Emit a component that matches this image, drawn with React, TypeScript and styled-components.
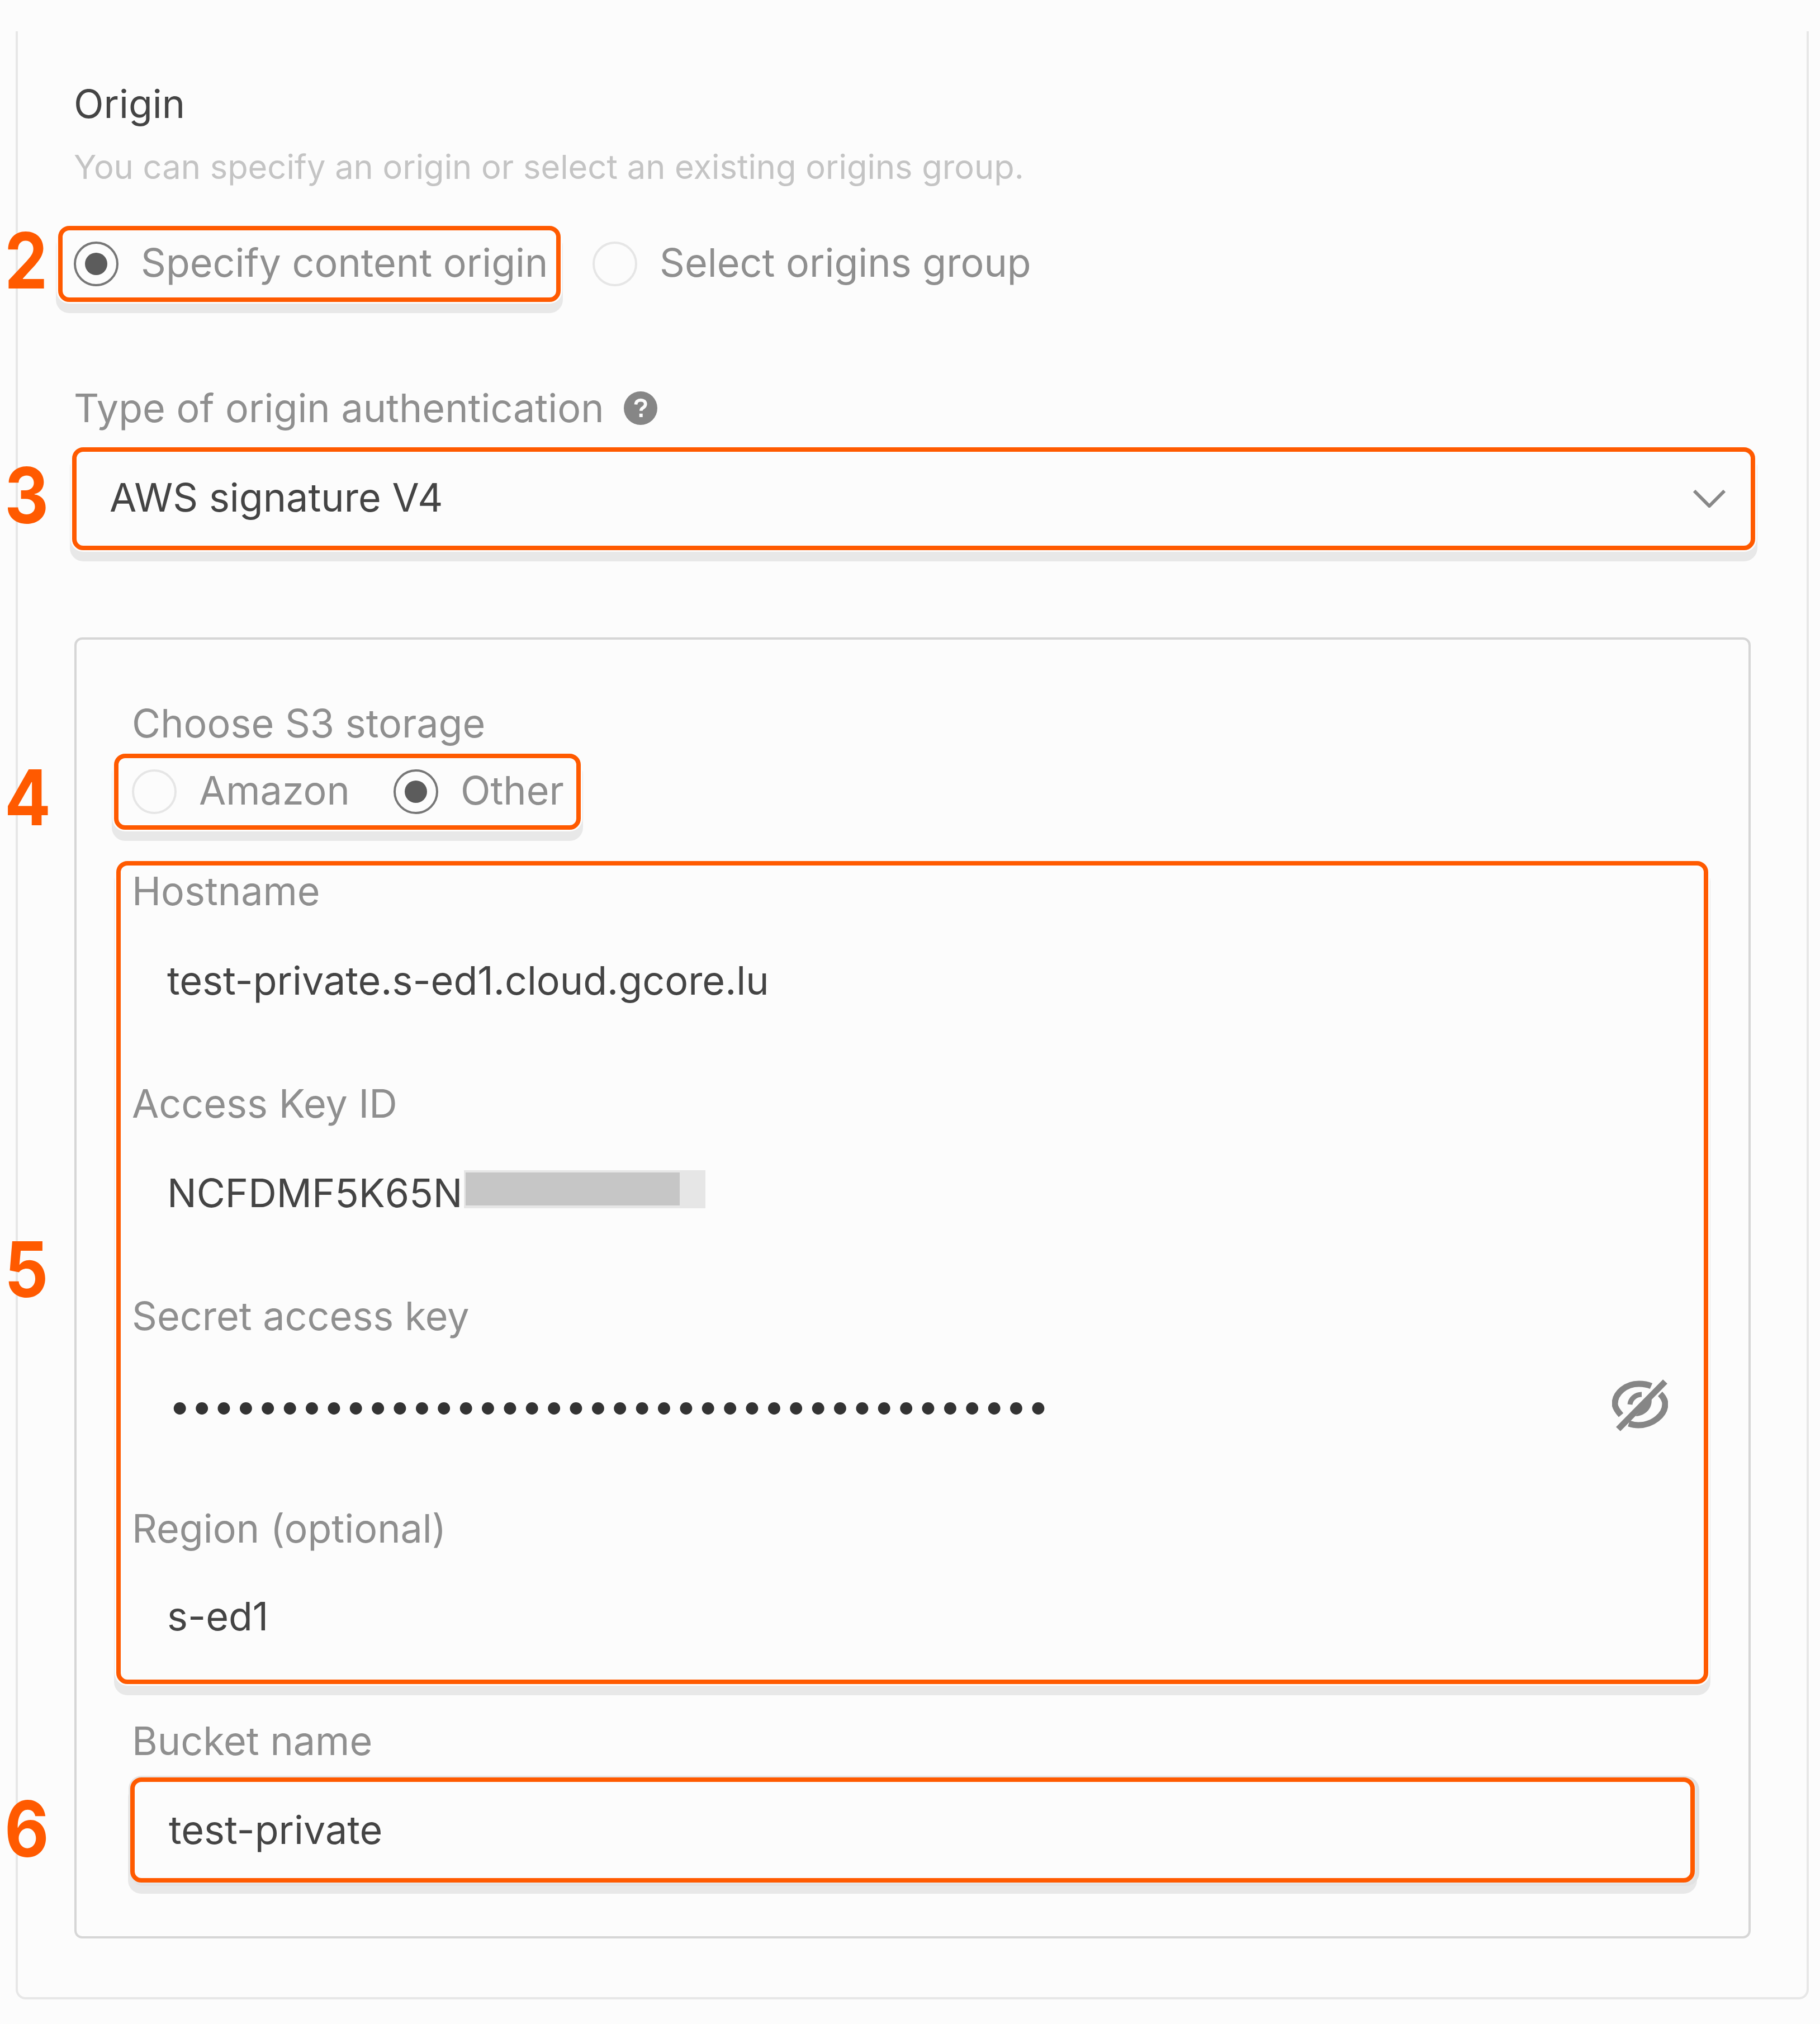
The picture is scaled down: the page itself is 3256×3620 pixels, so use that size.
import styled, { createGlobalStyle } from 'styled-components'

const orange = '#ff5a00'

const GlobalStyle = createGlobalStyle`
  html, body {
    background: #fcfcfc;
    margin: 0;
    padding: 0;
  }

  * {
    box-sizing: border-box;
  }
`

const Page = styled.div`
  color: #8f8f8f;
  font-family: Inter, 'Liberation Sans', sans-serif;
  font-size: 70px;
  height: 3620px;
  line-height: 80px;
  padding: 56px 20px 44px 28px;
  position: relative;
  width: 3256px;
`

const Card = styled.section`
  border: 4px solid #e7e7e7;
  border-radius: 0 0 18px 18px;
  border-top: none;
  height: 100%;
  padding: 90px 100px 100px 100px;
`

const Title = styled.h2`
  color: #444;
  font-size: 70px;
  font-weight: 400;
  line-height: 80px;
  margin: 0;
`

const Hint = styled.p`
  color: #c4c4c4;
  font-size: 59.6px;
  line-height: 70px;
  margin: 37px 0 0;
`

const Callout = styled.span<{ $top: number }>`
  color: ${orange};
  font-family: Inter, 'Liberation Sans', sans-serif;
  font-size: 138px;
  font-weight: 700;
  left: 8px;
  line-height: 140px;
  position: absolute;
  top: ${p => p.$top}px;
  transform: scaleX(0.89);
  transform-origin: left center;
`

const Highlight = styled.div`
  border: 8px solid ${orange};
  border-radius: 20px;
  box-shadow: 0 0 0 3px #fcfcfc, 0 16px 0 4px #e8e8e8;
`

const OriginRow = styled.div`
  align-items: center;
  display: flex;
  gap: 57px;
  margin-left: -28px;
  margin-top: 71px;
`

const OriginChoice = styled(Highlight)`
  align-items: center;
  display: flex;
  height: 136px;
  padding: 0 15px 0 20px;
  width: 899px;
`

const Radio = styled.label`
  align-items: center;
  display: inline-flex;
  gap: 40px;
  white-space: nowrap;
`

const RadioText = styled.span`
  margin-bottom: 5px;
`

const RadioMark = styled.span<{ $checked?: boolean }>`
  align-items: center;
  border: 4px solid ${p => (p.$checked ? '#777' : '#e6e6e6')};
  border-radius: 50%;
  display: flex;
  flex-shrink: 0;
  height: 80px;
  justify-content: center;
  width: 80px;

  &::after {
    background: #5c5c5c;
    border-radius: 50%;
    content: '';
    display: ${p => (p.$checked ? 'block' : 'none')};
    height: 40px;
    width: 40px;
  }
`

const FieldLabel = styled.div`
  align-items: center;
  display: flex;
  gap: 35px;
  height: 80px;
  line-height: 80px;
`

const AuthLabel = styled(FieldLabel)`
  margin-top: 150px;
`

const HelpIcon = styled.svg`
  flex-shrink: 0;
  height: 60px;
  width: 60px;
`

const SelectBox = styled(Highlight)`
  align-items: center;
  color: #444;
  display: flex;
  height: 184px;
  justify-content: space-between;
  margin: 30px -8px 0 -3px;
  padding: 0 44px 0 59px;
`

const SelectValue = styled.span`
  margin-bottom: 4px;
`

const Chevron = styled.svg`
  height: 32px;
  width: 60px;
`

const Group = styled.div`
  border: 4px solid #d6d6d6;
  border-radius: 14px;
  margin: 156px 0 0 1px;
  padding: 110px 72px 96px 99px;
`

const StorageChoice = styled(Highlight)`
  align-items: center;
  display: inline-flex;
  gap: 78px;
  height: 136px;
  margin: 14px 0 0 -32px;
  padding: 0 22px 0 24px;
`

const CredentialsBox = styled(Highlight)`
  margin: 56px 0 0 -28px;
  padding: 6px 0 20px 20px;
`

const Field = styled.div`
  & + & {
    margin-top: 90px;
  }
`

const Input = styled.div<{ $lift?: number }>`
  align-items: center;
  color: #444;
  display: flex;
  height: 180px;
  justify-content: space-between;
  margin-top: 30px;
  padding: 0 64px ${p => p.$lift ?? 0}px 63px;
`

const KeyValue = styled.span`
  align-items: center;
  display: flex;
`

const Redacted = styled.span`
  background: #e6e6e6;
  display: block;
  height: 68px;
  margin: 0 0 15px 2px;
  padding: 4px 46px 5px 3px;
  width: 432px;
`

const RedactedInner = styled.span`
  background: #c6c6c6;
  display: block;
  height: 100%;
`

const Secret = styled.span`
  color: #333;
  margin-left: 3px;
  white-space: nowrap;
`

const EyeIcon = styled.svg`
  height: 96px;
  width: 100px;
`

const BucketLabel = styled(FieldLabel)`
  margin-top: 62px;
`

const BucketInput = styled(Highlight)`
  align-items: center;
  box-shadow: 0 0 0 3px #e6e6e6, 4px 2px 0 4px #e2e2e2, 0 16px 0 4px #e8e8e8;
  color: #444;
  display: flex;
  height: 188px;
  margin: 25px 24px 0 -3px;
  padding: 0 0 0 61px;
`

const HelpGlyph = () => (
  <HelpIcon viewBox="0 0 24 24">
    <circle cx="12" cy="12" r="12" fill="#868686" />
    <path
      d="M8.6 9.4c.1-2 1.5-3.2 3.5-3.2s3.4 1.2 3.4 2.9c0 1.3-.7 2-1.8 2.7-1 .6-1.4 1.1-1.4 2.1"
      fill="none"
      stroke="#fcfcfc"
      strokeWidth="2.3"
    />
    <rect x="11.1" y="15.9" width="2.4" height="2.5" fill="#fcfcfc" />
  </HelpIcon>
)

const EyeSlash = () => (
  <EyeIcon viewBox="0 0 100 96" fill="none" stroke="#868686">
    <path d="M16 65C9 57 5 51 5 45 5 25 25 9 48 9c8 0 15 1 22 4" strokeWidth="11" />
    <path d="M86 27c6 6 9 13 9 18 0 20-23 38-48 38-6 0-11-1-17-3" strokeWidth="11" />
    <path d="M32 46c1-10 10-18 21-18" strokeWidth="9" />
    <path d="M70 33c4 17-8 33-28 34Z" fill="#868686" stroke="none" />
    <path d="M11 90 95 5" strokeWidth="11" />
  </EyeIcon>
)

export default function App() {
  return (
    <Page>
      <GlobalStyle />
      <Callout $top={396}>2</Callout>
      <Callout $top={816}>3</Callout>
      <Callout $top={1356}>4</Callout>
      <Callout $top={2200}>5</Callout>
      <Callout $top={3201}>6</Callout>
      <Card>
        <Title>Origin</Title>
        <Hint>You can specify an origin or select an existing origins group.</Hint>
        <OriginRow>
          <OriginChoice>
            <Radio>
              <RadioMark $checked />
              <RadioText>Specify content origin</RadioText>
            </Radio>
          </OriginChoice>
          <Radio>
            <RadioMark />
            <RadioText>Select origins group</RadioText>
          </Radio>
        </OriginRow>
        <AuthLabel>
          Type of origin authentication
          <HelpGlyph />
        </AuthLabel>
        <SelectBox>
          <SelectValue>AWS signature V4</SelectValue>
          <Chevron viewBox="0 0 60 32" fill="none" stroke="#888" strokeWidth="6">
            <path d="M3 2 30 29 57 2" />
          </Chevron>
        </SelectBox>
        <Group>
          <FieldLabel>Choose S3 storage</FieldLabel>
          <StorageChoice>
            <Radio>
              <RadioMark />
              <RadioText>Amazon</RadioText>
            </Radio>
            <Radio>
              <RadioMark $checked />
              <RadioText>Other</RadioText>
            </Radio>
          </StorageChoice>
          <CredentialsBox>
            <Field>
              <FieldLabel>Hostname</FieldLabel>
              <Input>test-private.s-ed1.cloud.gcore.lu</Input>
            </Field>
            <Field>
              <FieldLabel>Access Key ID</FieldLabel>
              <Input>
                <KeyValue>
                  NCFDMF5K65N
                  <Redacted>
                    <RedactedInner />
                  </Redacted>
                </KeyValue>
              </Input>
            </Field>
            <Field>
              <FieldLabel>Secret access key</FieldLabel>
              <Input>
                <Secret>{'•'.repeat(40)}</Secret>
                <EyeSlash />
              </Input>
            </Field>
            <Field>
              <FieldLabel>Region (optional)</FieldLabel>
              <Input $lift={6}>s-ed1</Input>
            </Field>
          </CredentialsBox>
          <BucketLabel>Bucket name</BucketLabel>
          <BucketInput>test-private</BucketInput>
        </Group>
      </Card>
    </Page>
  )
}
